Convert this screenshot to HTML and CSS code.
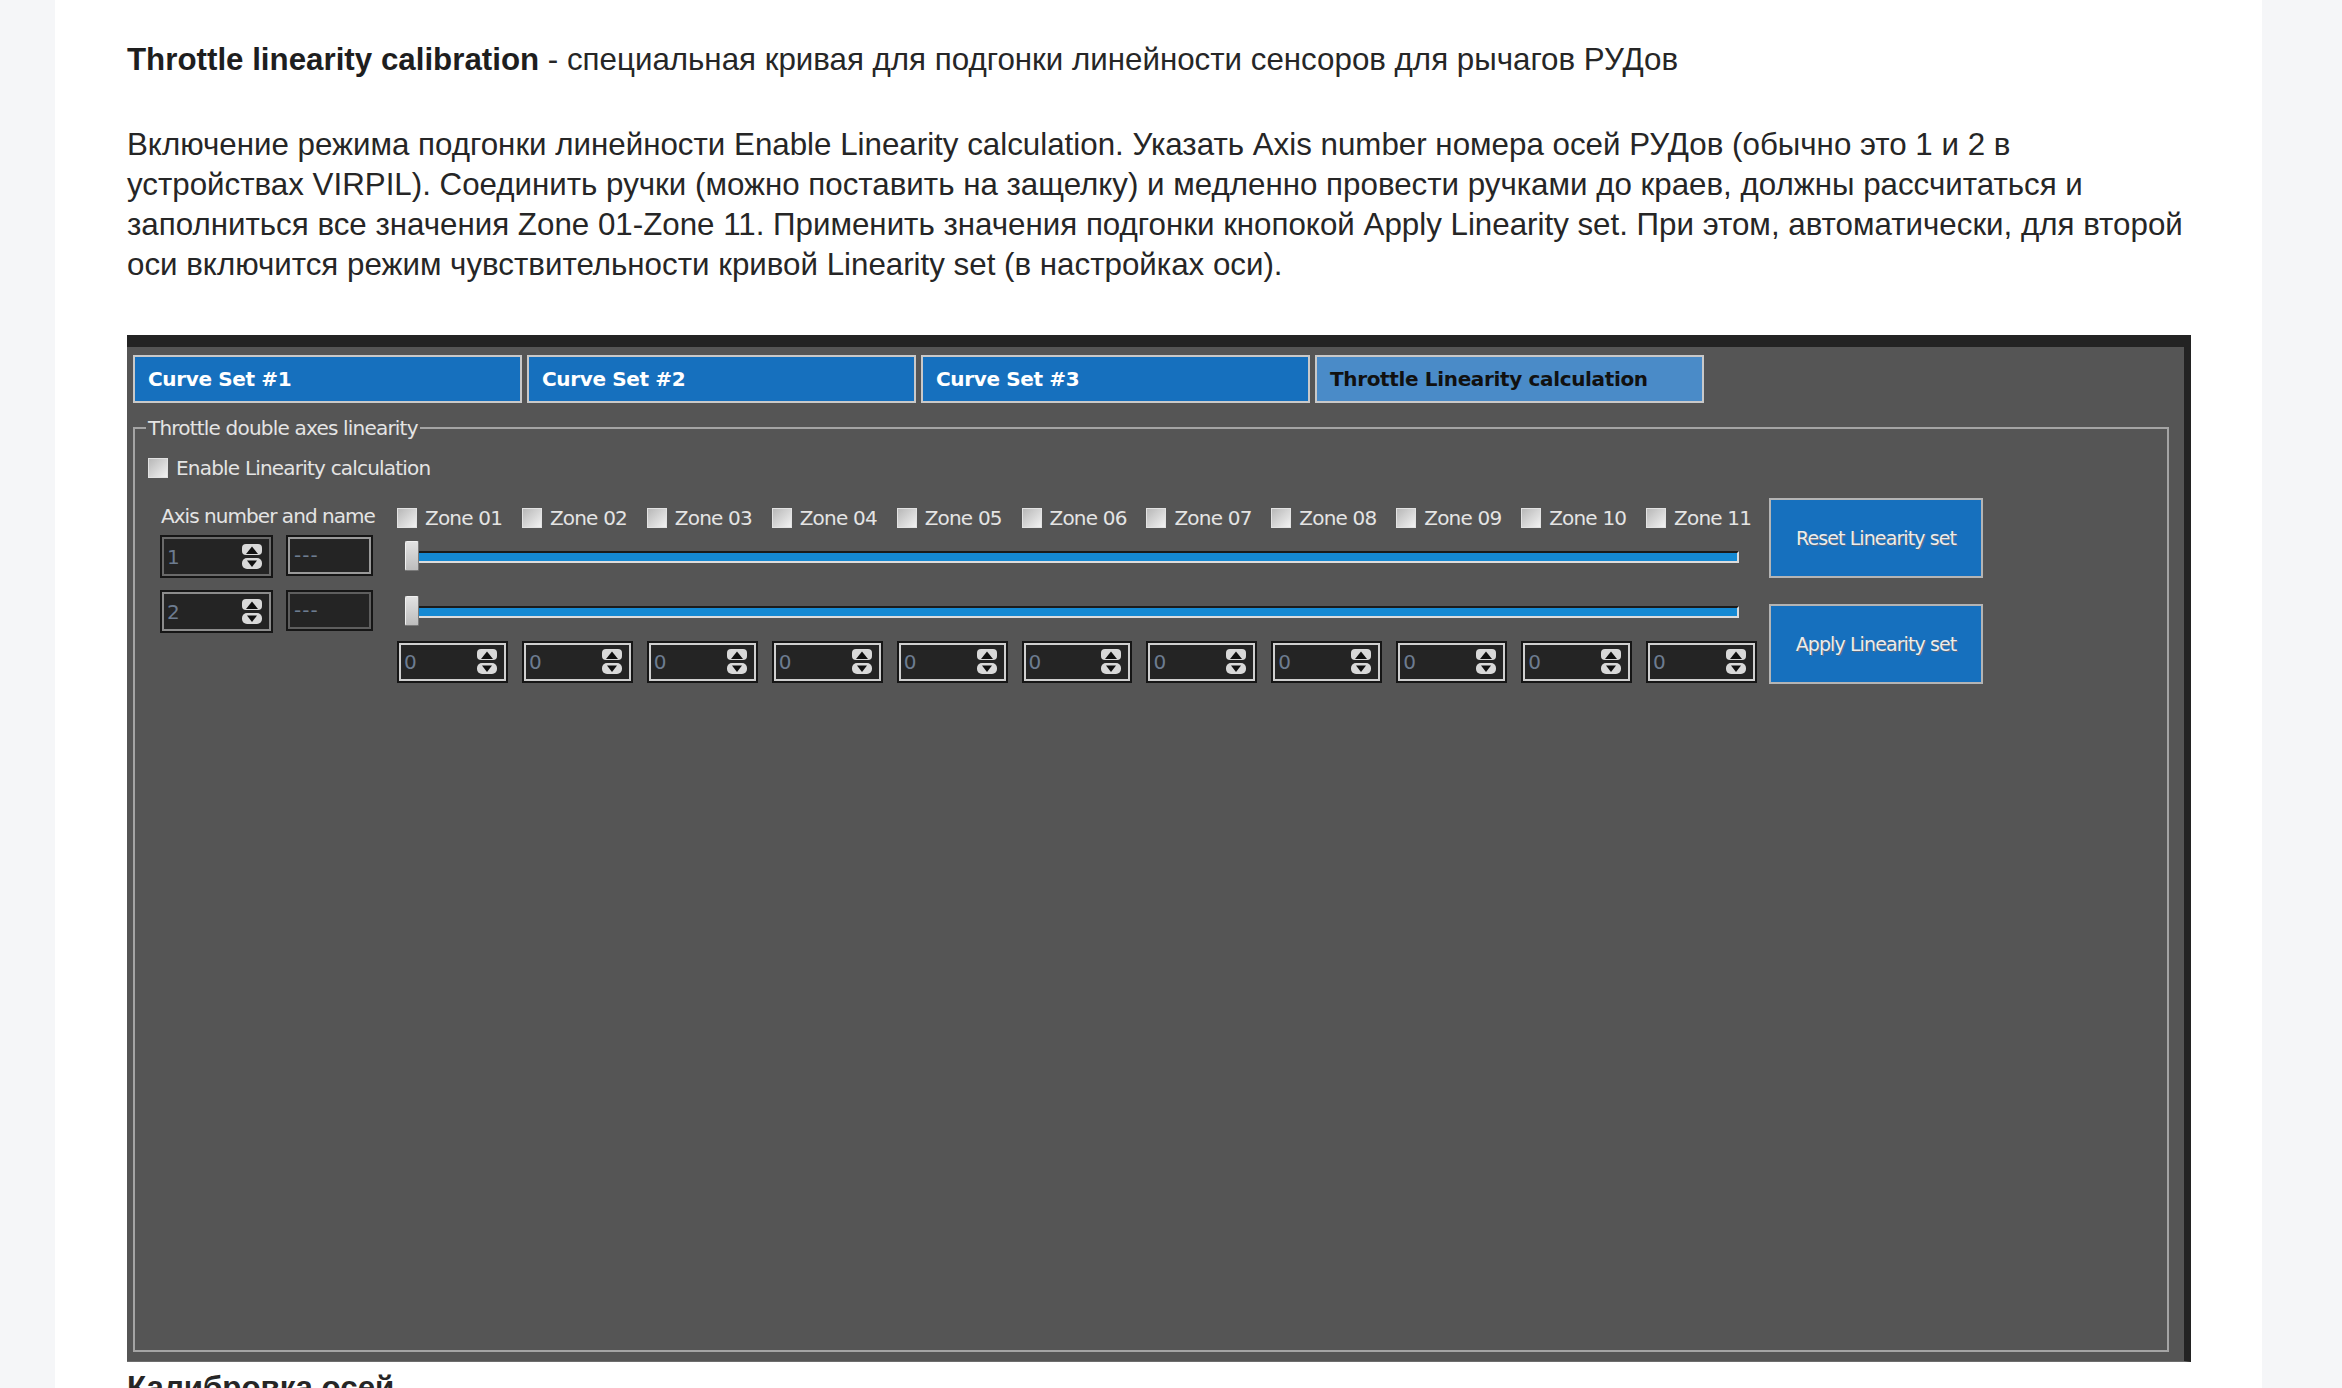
FILE: index.html
```html
<!DOCTYPE html>
<html lang="ru">
<head>
<meta charset="UTF-8">
<meta name="viewport" content="width=device-width, initial-scale=1.0">
<title>Throttle linearity calibration</title>
<link rel="stylesheet" href="styles.css">
</head>
<body>

<svg class="sprite" width="0" height="0">
    <symbol id="spin-arrows" viewBox="0 0 22 26">
        <rect x="1" y="0" width="20" height="11" rx="4" fill="#d9d9d9"/>
        <polygon points="5,10 11,2.5 17,10" fill="#111"/>
        <rect x="1" y="14" width="20" height="11" rx="5" fill="#d9d9d9"/>
        <polygon points="6,16.5 16,16.5 11,23" fill="#111"/>
    </symbol>
</svg>

<div class="page">
    <p><b>Throttle linearity calibration</b> - специальная кривая для подгонки линейности сенсоров для рычагов РУДов</p>
    <p>Включение режима подгонки линейности Enable Linearity calculation. Указать Axis number номера осей РУДов (обычно это 1 и 2 в устройствах VIRPIL). Соединить ручки (можно поставить на защелку) и медленно провести ручками до краев, должны рассчитаться и заполниться все значения Zone 01-Zone 11. Применить значения подгонки кнопокой Apply Linearity set. При этом, автоматически, для второй оси включится режим чувствительности кривой Linearity set (в настройках оси).</p>

    <div class="app">
        <div class="tabs">
            <div class="tab">Curve Set #1</div>
            <div class="tab">Curve Set #2</div>
            <div class="tab">Curve Set #3</div>
            <div class="tab active">Throttle Linearity calculation</div>
        </div>

        <div class="group">
            <span class="group-title">Throttle double axes linearity</span>
            <label class="check"><span class="cb"></span>Enable Linearity calculation</label>

            <div class="calib">
                <div class="calib-grid">
                    <div class="axis-label">Axis number and name</div>
                    <div class="zones">
                        <label class="check zone"><span class="cb"></span>Zone 01</label>
                        <label class="check zone"><span class="cb"></span>Zone 02</label>
                        <label class="check zone"><span class="cb"></span>Zone 03</label>
                        <label class="check zone"><span class="cb"></span>Zone 04</label>
                        <label class="check zone"><span class="cb"></span>Zone 05</label>
                        <label class="check zone"><span class="cb"></span>Zone 06</label>
                        <label class="check zone"><span class="cb"></span>Zone 07</label>
                        <label class="check zone"><span class="cb"></span>Zone 08</label>
                        <label class="check zone"><span class="cb"></span>Zone 09</label>
                        <label class="check zone"><span class="cb"></span>Zone 10</label>
                        <label class="check zone"><span class="cb"></span>Zone 11</label>
                    </div>

                    <div class="axis-row">
                        <div class="spin axis"><span>1</span><svg class="arrows"><use href="#spin-arrows"/></svg></div>
                        <div class="name-box light">---</div>
                    </div>
                    <div class="slider"><div class="groove"></div><div class="handle"></div></div>

                    <div class="axis-row">
                        <div class="spin axis light"><span>2</span><svg class="arrows"><use href="#spin-arrows"/></svg></div>
                        <div class="name-box">---</div>
                    </div>
                    <div class="slider"><div class="groove"></div><div class="handle"></div></div>

                    <div></div>
                    <div class="zone-spins">
                        <div class="spin"><span>0</span><svg class="arrows"><use href="#spin-arrows"/></svg></div>
                        <div class="spin"><span>0</span><svg class="arrows"><use href="#spin-arrows"/></svg></div>
                        <div class="spin"><span>0</span><svg class="arrows"><use href="#spin-arrows"/></svg></div>
                        <div class="spin"><span>0</span><svg class="arrows"><use href="#spin-arrows"/></svg></div>
                        <div class="spin"><span>0</span><svg class="arrows"><use href="#spin-arrows"/></svg></div>
                        <div class="spin"><span>0</span><svg class="arrows"><use href="#spin-arrows"/></svg></div>
                        <div class="spin"><span>0</span><svg class="arrows"><use href="#spin-arrows"/></svg></div>
                        <div class="spin"><span>0</span><svg class="arrows"><use href="#spin-arrows"/></svg></div>
                        <div class="spin"><span>0</span><svg class="arrows"><use href="#spin-arrows"/></svg></div>
                        <div class="spin"><span>0</span><svg class="arrows"><use href="#spin-arrows"/></svg></div>
                        <div class="spin"><span>0</span><svg class="arrows"><use href="#spin-arrows"/></svg></div>
                    </div>
                </div>

                <div class="actions">
                    <button class="btn">Reset Linearity set</button>
                    <button class="btn">Apply Linearity set</button>
                </div>
            </div>
        </div>
    </div>

    <p class="subhead">Калибровка осей</p>
</div>

</body>
</html>
```

FILE: styles.css
```css
body {
    margin: 0;
    background: #f5f6f8;
    font-family: "Liberation Sans", Arial, sans-serif;
}
.sprite {
    position: absolute;
}
.page {
    margin-left: 55px;
    width: 2207px;
    height: 100vh;
    overflow: hidden;
    box-sizing: border-box;
    padding: 40px 72px 0;
    background: #fff;
    color: #262626;
    font-size: 31.3px;
    line-height: 40px;
}
.page p {
    margin: 0 0 45px;
}
.page p b {
    color: #1e1e1e;
}
.subhead {
    font-weight: bold;
    margin-top: 6px !important;
}

/* screenshot of the app */
.app {
    width: 2064px;
    box-sizing: border-box;
    background: #555;
    border-top: 12px solid #232323;
    border-right: 7px solid #232323;
    border-bottom: 1px solid #6d6d6d;
    padding: 8px 15px 9px 6px;
    margin-top: 50px;
    font-family: "DejaVu Sans", Verdana, sans-serif;
    font-size: 20px;
    line-height: 24px;
    letter-spacing: -0.8px;
    color: #e4e4e4;
}
.tabs {
    display: flex;
    gap: 5px;
}
.tab {
    width: 389px;
    height: 48px;
    box-sizing: border-box;
    border: 2px solid #c9c9c9;
    background: #1670be;
    color: #fff;
    font-weight: bold;
    letter-spacing: -0.35px;
    line-height: 44px;
    padding-left: 13px;
}
.tab.active {
    background: #4a8bc8;
    color: #111;
}

.group {
    position: relative;
    margin-top: 24px;
    height: 925px;
    box-sizing: border-box;
    border: 2px solid #a4a4a4;
    padding: 29px 0 0 13px;
}
.group-title {
    position: absolute;
    top: -13px;
    left: 11px;
    padding: 0 2px;
    background: #555;
}

.check {
    display: flex;
    align-items: center;
    gap: 8px;
    height: 20px;
}
.cb {
    width: 18px;
    height: 18px;
    border: 1px solid #e2e2e2;
    background: linear-gradient(135deg, #b8b8b8, #f2f2f2);
    flex-shrink: 0;
}

.calib {
    display: flex;
    align-items: flex-start;
    margin: 20px 0 0 12px;
}
.calib-grid {
    display: grid;
    grid-template-columns: 237px 1360px;
    grid-template-rows: 27px 55px 51px 42px;
    align-items: start;
    margin-top: 10px;
}
.axis-label {
    padding-left: 1px;
    margin-top: -4px;
    letter-spacing: -0.95px;
}
.zones, .zone-spins {
    display: flex;
    gap: 14px;
}
.zone {
    width: 111px;
}
.axis-row {
    display: flex;
    gap: 13px;
    align-items: flex-start;
}

.spin {
    position: relative;
    width: 111px;
    height: 42px;
    box-sizing: border-box;
    border: 2px solid #161616;
    box-shadow: inset 0 0 0 2px #cfcfcf;
    background: #242424;
    display: flex;
    align-items: center;
    justify-content: space-between;
    padding: 0 8px 0 5px;
    color: #6d7c90;
}
.spin.axis {
    width: 113px;
    height: 43px;
    box-shadow: inset 0 0 0 2px #6a6a6a;
}
.spin.axis.light {
    box-shadow: inset 0 0 0 2px #8c8c8c;
}
.arrows {
    width: 22px;
    height: 26px;
}
.name-box {
    width: 87px;
    height: 41px;
    box-sizing: border-box;
    border: 2px solid #161616;
    box-shadow: inset 0 0 0 2px #5e5e5e;
    background: #242424;
    padding: 6px 6px 0;
    color: #6d7c90;
    letter-spacing: 1px;
}
.name-box.light {
    box-shadow: inset 0 0 0 2px #9a9a9a;
}

.slider {
    position: relative;
    display: flex;
    align-items: center;
    height: 43px;
    padding-left: 8px;
}
.groove {
    width: 1334px;
    height: 12px;
    box-sizing: border-box;
    background: #1489d3;
    border-top: 2px solid #1b1b1b;
    border-bottom: 2px solid #dcdcdc;
    border-right: 2px solid #dcdcdc;
}
.handle {
    position: absolute;
    left: 8px;
    top: 6px;
    width: 14px;
    height: 30px;
    box-sizing: border-box;
    border: 1px solid #f0f0f0;
    border-right-color: #7a7a7a;
    border-bottom-color: #7a7a7a;
    border-radius: 2px;
    background: linear-gradient(#e2e2e2, #bdbdbd);
}

.actions {
    display: flex;
    flex-direction: column;
    gap: 26px;
    margin-left: 12px;
}
.btn {
    width: 214px;
    height: 80px;
    border: 2px solid #b4b4b4;
    background: #1670be;
    color: #ececec;
    font-family: "DejaVu Sans", Verdana, sans-serif;
    font-size: 19px;
    letter-spacing: -0.9px;
    text-shadow: 1px 1px 0 #5a6a80;
    padding: 0;
}
```
